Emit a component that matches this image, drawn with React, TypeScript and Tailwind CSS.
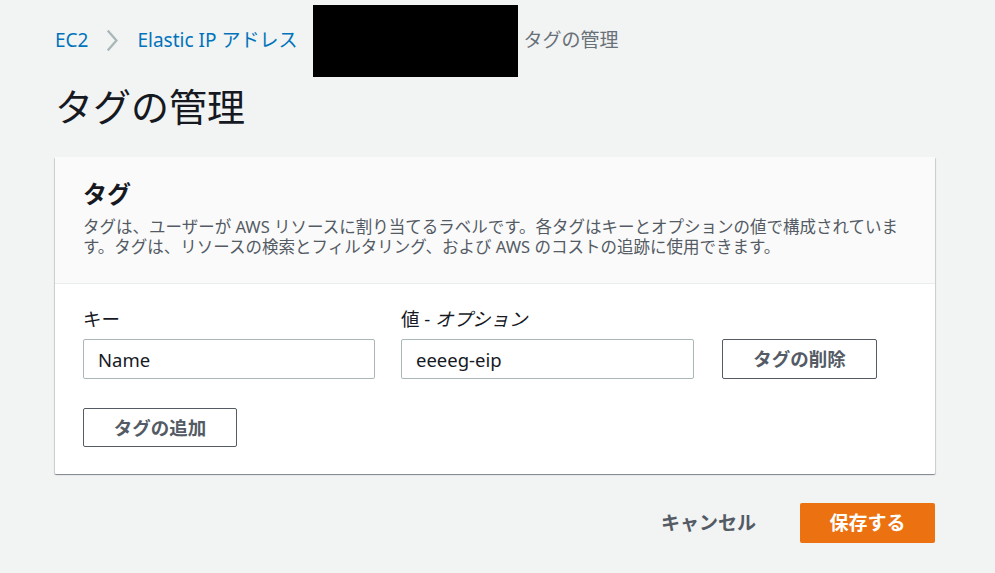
import * as React from 'react';

const FONT = "font-['Noto_Sans','Noto_Sans_CJK_JP',sans-serif]";

function Chevron() {
  return (
    <svg width="11" height="21" viewBox="0 0 11 21" fill="none" aria-hidden>
      <path d="M1.5 1.5 L9.5 10.5 L1.5 19.5" stroke="#aab7b8" strokeWidth="2.4" strokeLinecap="square" />
    </svg>
  );
}

function Breadcrumbs() {
  return (
    <nav className="flex items-center pt-[5px] text-[19px] leading-[24px]">
      <a className="text-[#0073bb] pb-[3px]" href="#">EC2</a>
      <span className="mx-[19px] flex pb-[2px]">
        <Chevron />
      </span>
      <a className="text-[#0073bb] pb-[3px]" href="#">Elastic IP アドレス</a>
      {/* redacted segment */}
      <span className="ml-[16px] mr-[5px] block h-[72px] w-[205px] bg-black" />
      <span className="text-[#687078] pb-[3px]">タグの管理</span>
    </nav>
  );
}

function Field({
  label,
  value,
  width,
}: {
  label: React.ReactNode;
  value: string;
  width: string;
}) {
  return (
    <div className={width}>
      <div className="text-[18.5px] leading-[24px] text-[#16191f]">{label}</div>
      <input
        readOnly
        value={value}
        className={`mt-[8px] h-[40px] w-full rounded-[2px] border border-[#aab7b8] bg-white px-[14px] text-[18.5px] text-[#16191f] outline-none ${FONT}`}
      />
    </div>
  );
}

export default function App() {
  return (
    <div className={`min-h-screen bg-[#f2f3f3] pl-[55px] pr-[60px] ${FONT}`}>
      <Breadcrumbs />

      <h1 className="mt-[7px] text-[38px] leading-[44px] font-normal text-[#16191f]">タグの管理</h1>

      <section className="mt-[29px] rounded-[1px] bg-white shadow-[0_1px_1px_0_rgba(0,28,36,0.3),1px_1px_1px_0_rgba(0,28,36,0.15),-1px_1px_1px_0_rgba(0,28,36,0.15)]">
        <div className="border-b border-[#eaeded] bg-[#fafafa] px-[28px] pt-[22px] pb-[26px]">
          <h2 className="text-[24px] leading-[30px] font-bold text-[#16191f]">タグ</h2>
          <div className="mt-[8px] whitespace-nowrap text-[16.5px] leading-[20px] text-[#545b64]">
            <p>タグは、ユーザーが AWS リソースに割り当てるラベルです。各タグはキーとオプションの値で構成されていま</p>
            <p>す。タグは、リソースの検索とフィルタリング、および AWS のコストの追跡に使用できます。</p>
          </div>
        </div>

        <div className="px-[28px] pt-[23px] pb-[27px]">
          <div className="flex items-end">
            <Field label="キー" value="Name" width="w-[292px]" />
            <div className="ml-[26px]">
              <Field
                label={
                  <>
                    値 - <i>オプション</i>
                  </>
                }
                value="eeeeg-eip"
                width="w-[293px]"
              />
            </div>
            <button
              type="button"
              className="ml-[28px] h-[40px] w-[155px] rounded-[2px] border border-[#545b64] bg-white text-[18.5px] font-bold text-[#545b64]"
            >
              タグの削除
            </button>
          </div>

          <button
            type="button"
            className="mt-[29px] h-[39px] w-[154px] rounded-[2px] border border-[#545b64] bg-white text-[18.5px] font-bold text-[#545b64]"
          >
            タグの追加
          </button>
        </div>
      </section>

      <div className="mt-[29px] flex items-center justify-end">
        <button type="button" className="h-[40px] px-[20px] text-[19px] font-bold text-[#545b64]">
          キャンセル
        </button>
        <button
          type="button"
          className="ml-[24px] h-[40px] w-[135px] rounded-[2px] bg-[#ec7211] text-[19px] font-bold text-white"
        >
          保存する
        </button>
      </div>
    </div>
  );
}
